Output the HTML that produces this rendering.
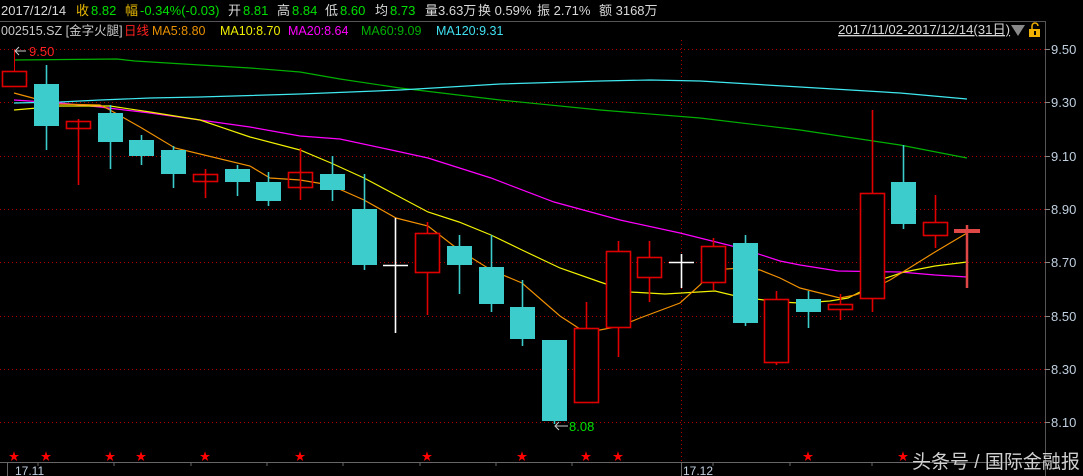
<!DOCTYPE html>
<html><head><meta charset="utf-8"><style>
html,body{margin:0;padding:0;background:#000;width:1083px;height:476px;overflow:hidden}
svg{display:block}
text{font-family:"Liberation Sans","Noto Sans CJK SC",sans-serif}
</style></head><body>
<svg width="1083" height="476" viewBox="0 0 1083 476" xmlns="http://www.w3.org/2000/svg">
<rect width="1083" height="476" fill="#000"/>
<g font-size="13">
<text x="1" y="15" fill="#d8d8d8">2017/12/14</text>
<text x="76" y="15" fill="#e8b800">收</text><text x="91" y="15" fill="#00e000">8.82</text>
<text x="125" y="15" fill="#e8b800">幅</text><text x="140" y="15" fill="#00e000">-0.34%(-0.03)</text>
<text x="228" y="15" fill="#d8d8d8">开</text><text x="243" y="15" fill="#00e000">8.81</text>
<text x="277" y="15" fill="#d8d8d8">高</text><text x="292" y="15" fill="#00e000">8.84</text>
<text x="325" y="15" fill="#d8d8d8">低</text><text x="340" y="15" fill="#00e000">8.60</text>
<text x="375" y="15" fill="#d8d8d8">均</text><text x="390" y="15" fill="#00e000">8.73</text>
<text x="425" y="15" fill="#d8d8d8">量3.63万</text>
<text x="478" y="15" fill="#d8d8d8">换 0.59%</text>
<text x="537" y="15" fill="#d8d8d8">振 2.71%</text>
<text x="599" y="15" fill="#d8d8d8">额 3168万</text>
</g>
<line x1="0" y1="21.5" x2="1045" y2="21.5" stroke="#555"/>
<line x1="1045.5" y1="21" x2="1045.5" y2="476" stroke="#555"/>
<g font-size="12.5">
<text x="1" y="35" fill="#c8c8c8">002515.SZ [金字火腿]</text>
<text x="124" y="35" fill="#ff2020">日线</text>
<text x="152" y="35" fill="#e89000">MA5:8.80</text>
<text x="220" y="35" fill="#f0f000">MA10:8.70</text>
<text x="288" y="35" fill="#ff00ff">MA20:8.64</text>
<text x="361" y="35" fill="#00b000">MA60:9.09</text>
<text x="436" y="35" fill="#40e0f0">MA120:9.31</text>
</g>
<text x="838" y="34" font-size="13.2" fill="#d8d8d8" text-decoration="underline">2017/11/02-2017/12/14(31日)</text>
<polygon points="1011,25 1025,25 1018,36" fill="#888"/>
<rect x="1029" y="29" width="11" height="8" fill="#f0b000"/>
<path d="M1032,29 v-3 a3,3 0 0 1 6,0" fill="none" stroke="#f0b000" stroke-width="1.5"/>
<rect x="1034" y="31" width="2" height="4" fill="#000"/>
<g stroke="#b00000" stroke-dasharray="1,3">
<line x1="0" y1="49.5" x2="1045" y2="49.5"/>
<line x1="0" y1="102.5" x2="1045" y2="102.5"/>
<line x1="0" y1="156.5" x2="1045" y2="156.5"/>
<line x1="0" y1="209.5" x2="1045" y2="209.5"/>
<line x1="0" y1="262.5" x2="1045" y2="262.5"/>
<line x1="0" y1="316.5" x2="1045" y2="316.5"/>
<line x1="0" y1="369.5" x2="1045" y2="369.5"/>
<line x1="0" y1="422.5" x2="1045" y2="422.5"/>
<line x1="681.5" y1="40" x2="681.5" y2="476"/>
</g>
<g stroke="#888"><line x1="1045" y1="49.5" x2="1050" y2="49.5"/><line x1="1045" y1="102.5" x2="1050" y2="102.5"/><line x1="1045" y1="156.5" x2="1050" y2="156.5"/><line x1="1045" y1="209.5" x2="1050" y2="209.5"/><line x1="1045" y1="262.5" x2="1050" y2="262.5"/><line x1="1045" y1="316.5" x2="1050" y2="316.5"/><line x1="1045" y1="369.5" x2="1050" y2="369.5"/><line x1="1045" y1="422.5" x2="1050" y2="422.5"/></g>
<g font-size="13" fill="#c0d0e0">
<text x="1051" y="54">9.50</text><text x="1051" y="107">9.30</text><text x="1051" y="161">9.10</text><text x="1051" y="214">8.90</text><text x="1051" y="267">8.70</text><text x="1051" y="321">8.50</text><text x="1051" y="374">8.30</text><text x="1051" y="427">8.10</text>
</g>
<polyline fill="none" stroke="#00b000" stroke-width="1.2" points="14,60 117,59 135,61 200,65 250,68 300,72 340,79 400,88 500,100 600,110 700,118 800,130 900,145 967,158"/>
<polyline fill="none" stroke="#40e8f0" stroke-width="1.2" points="14,103 60,102 100,100 150,98 200,97 300,94 400,90 500,84 600,81 650,80 700,81 800,87 900,93 967,99"/>
<polyline fill="none" stroke="#ff00ff" stroke-width="1.2" points="14,100 60,103 100,107 150,113 200,120 250,127 300,136 340,139 396,151 428,158 491,178 554,202 620,220 680,233 740,248 780,261 800,265 838,271 900,272 935,275 967,277"/>
<polyline fill="none" stroke="#f0f000" stroke-width="1.2" points="14,110 60,106 110,106 150,112 200,120 250,137 300,150 331,163 364,178 396,195 428,212 459,222 491,235 522,250 560,268 600,282 630,292 665,294 715,291 740,297 780,302 800,303 830,301 848,298 860,292 880,280 904,272 935,266 967,262"/>
<polyline fill="none" stroke="#f09000" stroke-width="1.2" points="14,93 55,104 100,105 110,110 140,127 175,148 200,154 250,166 270,178 300,180 330,185 364,200 396,218 428,226 459,250 491,270 522,283 560,316 580,329 600,330 620,326 640,318 680,303 700,285 713,270 740,268 760,270 780,278 800,288 820,293 840,298 855,295 870,290 890,280 935,252 967,233"/>
<line x1="14.5" y1="49" x2="14.5" y2="71" stroke="#e00000"/>
<g stroke="#e00000" stroke-width="1.6" fill="none">
<rect x="2.5" y="71.5" width="24" height="15"/>
<line x1="78.5" y1="119" x2="78.5" y2="185"/><rect x="66.5" y="121.5" width="24" height="7"/>
<line x1="205.5" y1="169" x2="205.5" y2="198"/><rect x="193.5" y="174.5" width="24" height="7"/>
<line x1="300.5" y1="148" x2="300.5" y2="200"/><rect x="288.5" y="172.5" width="24" height="15"/>
<line x1="427.5" y1="222" x2="427.5" y2="315"/><rect x="415.5" y="233.5" width="24" height="39" fill="#000"/>
<line x1="586.5" y1="302" x2="586.5" y2="402"/><rect x="574.5" y="328.5" width="24" height="74" fill="#000"/>
<line x1="618.5" y1="241" x2="618.5" y2="357"/><rect x="606.5" y="251.5" width="24" height="76" fill="#000"/>
<line x1="649.5" y1="241" x2="649.5" y2="302"/><rect x="637.5" y="257.5" width="24" height="20" fill="#000"/>
<line x1="713.5" y1="238" x2="713.5" y2="290"/><rect x="701.5" y="246.5" width="24" height="36" fill="#000"/>
<line x1="776.5" y1="291" x2="776.5" y2="365"/><rect x="764.5" y="299.5" width="24" height="63" fill="#000"/>
<line x1="840.5" y1="294" x2="840.5" y2="320"/><rect x="828.5" y="304.5" width="24" height="5" fill="#000"/>
<line x1="872.5" y1="110" x2="872.5" y2="312"/><rect x="860.5" y="193.5" width="24" height="105" fill="#000"/>
<line x1="935.5" y1="195" x2="935.5" y2="248"/><rect x="923.5" y="222.5" width="24" height="13" fill="#000"/>
</g>
<line x1="967" y1="225" x2="967" y2="288" stroke="#e04848" stroke-width="2.5"/>
<rect x="954" y="229" width="26" height="4" fill="#e04848"/>
<g stroke="#3ccccc" stroke-width="1.6">
<line x1="46.5" y1="65" x2="46.5" y2="150"/><line x1="110.5" y1="105" x2="110.5" y2="169"/><line x1="141.5" y1="135" x2="141.5" y2="165"/><line x1="173.5" y1="146" x2="173.5" y2="188"/><line x1="237.5" y1="165" x2="237.5" y2="196"/><line x1="268.5" y1="172" x2="268.5" y2="206"/><line x1="332.5" y1="156" x2="332.5" y2="201"/><line x1="364.5" y1="174" x2="364.5" y2="270"/><line x1="459.5" y1="235" x2="459.5" y2="294"/><line x1="491.5" y1="235" x2="491.5" y2="312"/><line x1="522.5" y1="280" x2="522.5" y2="346"/><line x1="554.5" y1="340" x2="554.5" y2="424"/><line x1="745.5" y1="235" x2="745.5" y2="326"/><line x1="808.5" y1="291" x2="808.5" y2="328"/><line x1="903.5" y1="145" x2="903.5" y2="229"/>
</g>
<g fill="#3ccccc">
<rect x="34" y="84" width="25" height="42"/><rect x="98" y="113" width="25" height="29"/><rect x="129" y="140" width="25" height="16"/><rect x="161" y="150" width="25" height="24"/><rect x="225" y="169" width="25" height="13"/><rect x="256" y="182" width="25" height="19"/><rect x="320" y="174" width="25" height="16"/><rect x="352" y="209" width="25" height="56"/><rect x="447" y="246" width="25" height="19"/><rect x="479" y="267" width="25" height="37"/><rect x="510" y="307" width="25" height="32"/><rect x="542" y="340" width="25" height="81"/><rect x="733" y="243" width="25" height="80"/><rect x="796" y="299" width="25" height="13"/><rect x="891" y="182" width="25" height="42"/>
</g>
<g stroke="#fff" stroke-width="1.6">
<line x1="395.5" y1="218" x2="395.5" y2="333"/><line x1="383" y1="265.5" x2="408" y2="265.5"/>
<line x1="681.5" y1="254" x2="681.5" y2="288"/><line x1="669" y1="262.5" x2="694" y2="262.5"/>
</g>
<path d="M26,51 L16,51 M19,47 L15,51 L19,55" stroke="#ccc" fill="none"/>
<text x="29" y="56" font-size="13" fill="#ff2020">9.50</text>
<path d="M568,426 L556,426 M559,422 L555,426 L559,430" stroke="#ccc" fill="none"/>
<text x="569" y="431" font-size="13" fill="#00e000">8.08</text>
<line x1="0" y1="462.5" x2="1045" y2="462.5" stroke="#666"/>
<g stroke="#666"><line x1="7.5" y1="462" x2="7.5" y2="476"/><line x1="681.5" y1="462" x2="681.5" y2="476"/><line x1="38" y1="462" x2="38" y2="466"/><line x1="114" y1="462" x2="114" y2="466"/><line x1="191" y1="462" x2="191" y2="466"/><line x1="267" y1="462" x2="267" y2="466"/><line x1="343" y1="462" x2="343" y2="466"/><line x1="420" y1="462" x2="420" y2="466"/><line x1="496" y1="462" x2="496" y2="466"/><line x1="572" y1="462" x2="572" y2="466"/><line x1="713" y1="462" x2="713" y2="466"/><line x1="790" y1="462" x2="790" y2="466"/><line x1="872" y1="462" x2="872" y2="466"/></g>
<text x="15" y="475" font-size="12" fill="#c0d0e0">17.11</text>
<text x="683" y="475" font-size="12" fill="#c0d0e0">17.12</text>
<g font-size="11" fill="#ff0000" text-anchor="middle">
<text x="14" y="460">★</text><text x="46" y="460">★</text><text x="110" y="460">★</text><text x="141" y="460">★</text><text x="205" y="460">★</text><text x="300" y="460">★</text><text x="427" y="460">★</text><text x="522" y="460">★</text><text x="586" y="460">★</text><text x="618" y="460">★</text><text x="808" y="460">★</text><text x="903" y="460">★</text>
</g>
<text x="912" y="468" font-size="19" fill="#d0d0d0" font-family="'Noto Sans CJK SC',sans-serif">头条号 / 国际金融报</text>
</svg>
</body></html>
